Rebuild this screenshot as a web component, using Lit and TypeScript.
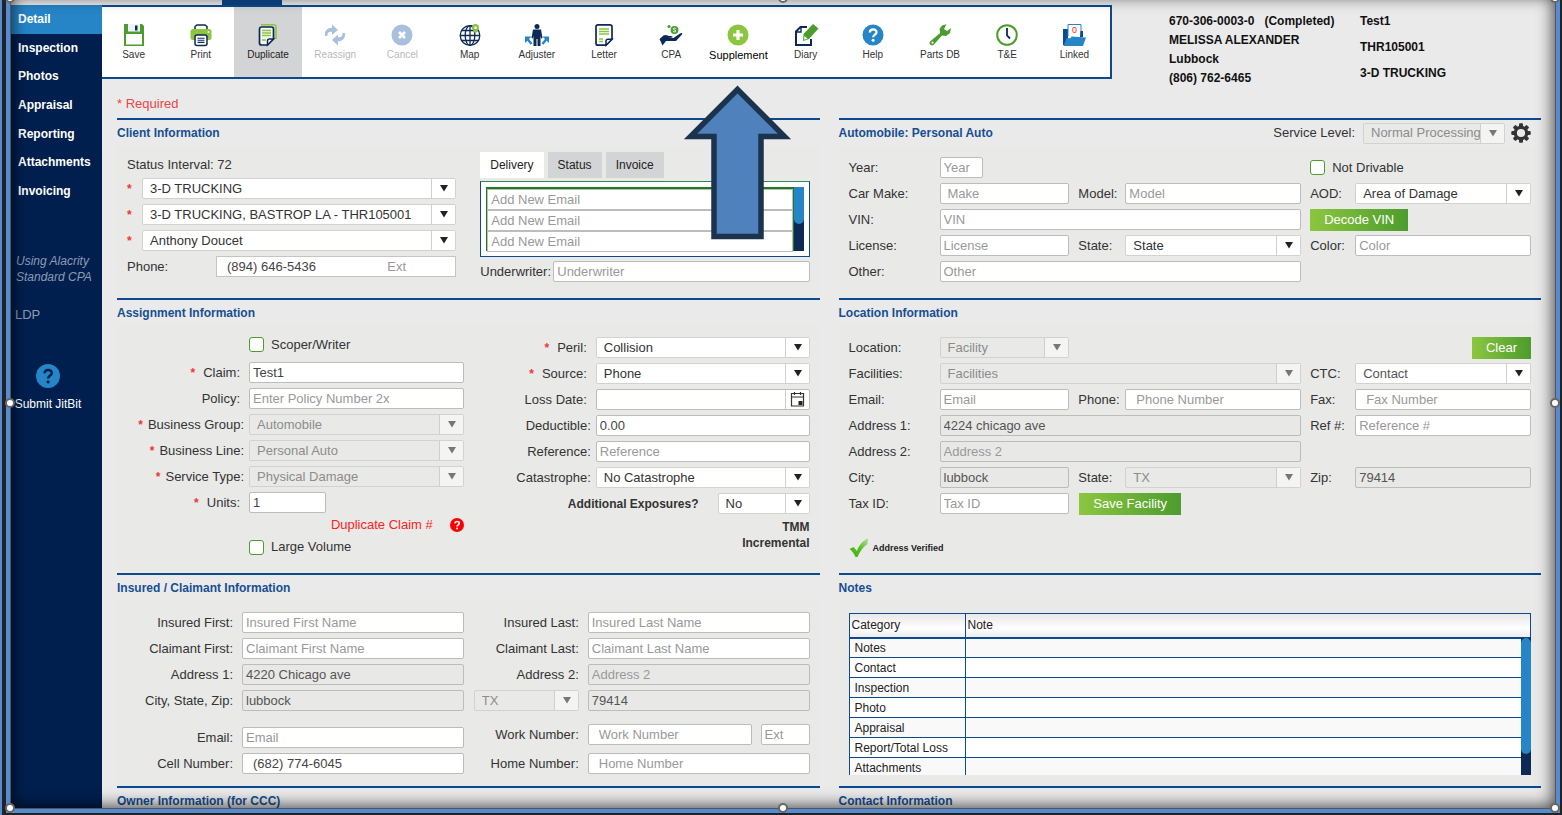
import { LitElement, html, svg, css, nothing, TemplateResult } from "lit";
import { customElement } from "lit/decorators.js";
import { classMap } from "lit/directives/class-map.js";

const NAVY = "#0d2a57";
const GREEN = "#4c9c2e";
const LIME = "#8cc63f";
const BLUE = "#2585c7";

const page = (x: number, y: number, w: number, h: number) => svg`
  <path d=${`M${x + 2} ${y}H${x + w - 2}a2 2 0 0 1 2 2V${y + h - 6}L${x + w - 6} ${y + h}H${x + 2}a2 2 0 0 1-2-2V${y + 2}a2 2 0 0 1 2-2z`} fill="#fff" fill-opacity="0.800" stroke=${NAVY} stroke-width="1.700"/>
  <path d=${`M${x + w} ${y + h - 6}h-4a2 2 0 0 0-2 2v4z`} fill="#fff" stroke=${NAVY} stroke-width="1.500"/>`;

const ICONS: Record<string, TemplateResult> = {
  save: svg`<path d="M1 0h18l2 2v20H1z" fill=${GREEN}/><rect x="5" y="0" width="12" height="7.500" fill="#eef3fb"/><rect x="12" y="1.500" width="2.500" height="5" fill=${NAVY}/><rect x="3" y="10" width="16" height="10.500" fill="#fff"/>`,
  print: svg`<path d="M5 6V2.500L7 1h8l2 1.500V6" fill="#fff" stroke=${NAVY} stroke-width="1.500"/><rect x="0.500" y="5" width="21" height="11" rx="2.500" fill=${LIME}/><circle cx="18.500" cy="8" r="1" fill="#fff"/><rect x="5" y="11" width="12" height="10.500" rx="2" fill="#fff" stroke=${NAVY} stroke-width="1.500"/><path d="M7.500 14.200h7M7.500 16.300h7M7.500 18.400h7" stroke=${NAVY} stroke-width="1.100"/>`,
  duplicate: svg`<path d="M4 0.800h13a2 2 0 0 1 2 2V15" fill="none" stroke=${LIME} stroke-width="1.600"/>${page(2.5, 3, 14, 18)}<path d="M5 6.500h9M5 9h9M5 11.500h9M5 16h4" stroke=${LIME} stroke-width="1.400"/>`,
  reassign: svg`<path d="M1 12c-1-5 3-9 7-8V0.500L14 6 8 11V8C5 7 3 9 3.500 12z" fill="#a9c0dc"/><path d="M21 9c1 5-3 9-7 8v4.500L8 16l6-5.500V13c3 1 5-1 4.500-4z" fill="#a9c0dc"/>`,
  cancel: svg`<circle cx="11" cy="11" r="10.500" fill="#a9c0dc"/><path d="M8 8l6 6M14 8l-6 6" stroke="#fff" stroke-width="2.600"/>`,
  map: svg`<g fill="none" stroke=${NAVY} stroke-width="1.300"><circle cx="11" cy="11.500" r="9.800"/><ellipse cx="11" cy="11.500" rx="4.800" ry="9.800"/><path d="M11 1.700v19.600M1.200 11.500h19.600M2.600 6.500h16.800M2.600 16.500h16.800"/></g><path d="M16.500 10.500c-1-3-3.500-4.500-3.500-7a3.500 3.500 0 0 1 7 0c0 2.500-2.500 4-3.500 7z" fill=${LIME}/><circle cx="16.500" cy="3.700" r="1.300" fill="#fff"/>`,
  adjuster: svg`<circle cx="11" cy="2.500" r="2.500" fill=${NAVY}/><path d="M7 5.500h8l1.500 8.500-1.500.500-.500-3v10.500h-3v-7h-1v7h-3V11.500l-.500 3-1.500-.500z" fill=${NAVY}/><path d="M5.500 20L1.500 15M16.500 20l4-5" stroke=${BLUE} stroke-width="2.400"/><path d="M-1 12.500h6.500L-1 19zM23 12.500h-6.500L23 19z" fill=${BLUE}/>`,
  letter: svg`${page(3, 0.9, 16, 20.3)}<path d="M6 5h10M6 7.500h10M6 10h10M6 15h4M6 17.500h4" stroke=${LIME} stroke-width="1.400"/>`,
  cpa: svg`<circle cx="9" cy="2.500" r="1.600" fill=${GREEN}/><circle cx="14.500" cy="6" r="3.900" fill=${GREEN}/><path d="M16 4.700c-1-1-3-.500-2.800.500.300 1 2.600.700 2.600 1.800 0 1-2 1.200-2.800.200" fill="none" stroke="#fff" stroke-width="0.900"/><path d="M-0.500 15l4-3.500c3-1.500 4 .500 6.500.500 2 0 3 .500 2.500 1.500l-4 .500h5L20 9.500c1.500-1 3-.500 2 1L16 17H6l-3.500 4.500z" fill=${NAVY}/>`,
  supplement: svg`<circle cx="11" cy="11" r="10.500" fill=${LIME}/><path d="M11 6v10M6 11h10" stroke="#fff" stroke-width="3.200"/>`,
  diary: svg`<path d="M12 3H5.500L1 7.500V21h15v-6" fill="none" stroke=${NAVY} stroke-width="2"/><path d="M1 8h5V3" fill="none" stroke=${NAVY} stroke-width="1.400"/><path d="M8.500 10L18 0l5.500 4.500L14 15l-6 2z" fill=${GREEN}/><path d="M9.500 12l3 2.800-3.500 1z" fill="#fff"/>`,
  help: svg`<circle cx="11" cy="11" r="10.500" fill=${BLUE}/><path d="M7.800 8.500c.300-4 6.700-4 6.700-.300 0 2.500-3.300 2.400-3.300 5" fill="none" stroke="#fff" stroke-width="2.300"/><circle cx="11.100" cy="16.300" r="1.500" fill="#fff"/>`,
  parts: svg`<path d="M17.500.300l-4.500 1.200-2.500 3.500.700 4L1 17.500c-1.500 2 1 5 3.500 3.500L13 11.500l4 .500 4-3L22 4l-4 3-3-2z" fill=${GREEN}/><circle cx="3.500" cy="18.700" r="1.100" fill="#fff"/>`,
  te: svg`<circle cx="11" cy="11" r="9.800" fill="#fff" stroke=${GREEN} stroke-width="2"/><path d="M11 4v7.500l3 3" fill="none" stroke=${NAVY} stroke-width="1.800"/>`,
  linked: svg`<path d="M0 5h5v12L2 21H0z" fill="#0d4c8c"/><path d="M5 12V0.500h13V12" fill="#fff" stroke=${BLUE} stroke-width="1"/><path d="M17.500 7H20v6h-3z" fill="#0d4c8c"/><path d="M3.500 14l4 .200 1-1.700L23 13.500 20 22H0.500z" fill=${BLUE}/><text x="11.500" y="9" text-anchor="middle" font-size="9" fill="#f22">0</text>`,
};

const TOOLS: [string, string, string?][] = [
  ["save", "Save"], ["print", "Print"], ["duplicate", "Duplicate", "active"],
  ["reassign", "Reassign", "off"], ["cancel", "Cancel", "off"], ["map", "Map"],
  ["adjuster", "Adjuster"], ["letter", "Letter"], ["cpa", "CPA"],
  ["supplement", "Supplement", "strong"], ["diary", "Diary"], ["help", "Help"],
  ["parts", "Parts DB"], ["te", "T&E"], ["linked", "Linked"],
];

const NAV = ["Detail", "Inspection", "Photos", "Appraisal", "Reporting", "Attachments", "Invoicing"];
const NOTES = ["Notes", "Contact", "Inspection", "Photo", "Appraisal", "Report/Total Loss", "Attachments"];

interface Opt {
  value?: string;
  ph?: string;
  cls?: string;
  disabled?: boolean;
  name?: string;
}

const input = (id: string, o: Opt = {}) => html`<input
  id=${id} class="box ${o.cls ?? ""}" type="text" ?disabled=${!!o.disabled}
  aria-label=${o.name ?? nothing} .value=${o.value ?? ""} placeholder=${o.ph ?? ""}>`;

const select = (id: string, text: string, o: Opt = {}) => html`<span
  class=${`sel ${o.cls ?? ""} ${o.disabled ? "dis" : ""}`}>
  <select id=${id} class="box" ?disabled=${!!o.disabled} aria-label=${o.name ?? nothing}><option>${text}</option></select>
  <svg class="arrow" viewBox="0 0 25 21" aria-hidden="true"><path class="cell" d="M0.500 1H24v19H0.500z"/><path class="rule" d="M0.500 1v19"/><path class="tri" d="M9 7h8l-4 6.500z"/></svg>
</span>`;

const label = (id: string, text: string, cls = "", req = false) => html`<label
  for=${id} class=${cls}>${req ? html`<b class="req">*</b>` : nothing}${text}</label>`;

const check = (id: string, text: string, cls = "") => html`<span class="check ${cls}"><input
  type="checkbox" id=${id}><label for=${id}>${text}</label></span>`;

@customElement("app-root")
export class AppRoot extends LitElement {
  static styles = css`
    :host {
      display: block;
      font-family: "Liberation Sans", Arial, sans-serif;
      font-size: 13px;
      line-height: 16px;
      color: #333;
    }
    *, *::before, *::after { box-sizing: border-box; }
    input, select, button { font: inherit; margin: 0; }
    .shell {
      position: relative;
      display: flex;
      height: 100vh;
      overflow: hidden;
      padding: 5px 7px 0 11px;
      background: #eaeaea;
    }
    .stub {
      position: absolute;
      top: 0;
      left: 222px;
      width: 60px;
      height: 5px;
      background: #0b3a75;
      z-index: 4;
    }
    /* sidebar */
    .side {
      flex: none;
      width: 91px;
      background: #001f4e;
      position: relative;
      z-index: 1;
    }
    .nav {
      list-style: none;
      margin: 0;
      padding: 0;
      height: 200px;
      display: flex;
      flex-direction: column;
    }
    .nav li { flex: 1; display: flex; }
    .nav a {
      flex: 1;
      display: flex;
      align-items: center;
      padding-left: 7px;
      color: #fff;
      text-decoration: none;
      font-weight: bold;
      font-size: 12px;
    }
    .nav .on { background: #2585c7; }
    .using { margin: 48px 0 0; padding-left: 5px; color: #8e9cb3; font-style: italic; white-space: nowrap; font-size: 12px; }
    .ldp { margin: 22px 0 0; padding-left: 4px; color: #8e9cb3; }
    .submit {
      display: flex;
      flex-direction: column;
      align-items: center;
      gap: 8px;
      width: 74px;
      margin-top: 41px;
      padding: 0;
      border: 0;
      background: none;
      color: #fff;
      font-size: 12px;
      white-space: nowrap;
    }
    .submit svg { width: 24px; height: 24px; }
    /* header */
    .main { flex: 1; min-width: 0; }
    .head { display: flex; height: 74px; }
    .tools {
      flex: 1;
      min-width: 0;
      display: flex;
      margin-left: -2px;
      padding-right: 2px;
      border: 2px solid #0b4a8f;
      border-left: 0;
      background: #fff;
    }
    .tool {
      flex: 1 1 0;
      min-width: 0;
      display: flex;
      flex-direction: column;
      align-items: center;
      gap: 2px;
      padding: 17px 0 0;
      border: 0;
      background: none;
      color: #333;
      font-size: 10px;
      line-height: 14px;
      white-space: nowrap;
    }
    .tool svg { width: 22px; height: 22px; overflow: visible; }
    .tool.active { background: #d3d4d6; color: #222; }
    .tool.off { color: #b9b9b9; }
    .tool.strong { font-size: 11px; color: #000; }
    .info {
      flex: none;
      width: 443px;
      display: flex;
      padding: 7px 0 0 57px;
      font-weight: bold;
      color: #111;
      font-size: 12px;
    }
    .info p { margin: 0; }
    .who { width: 191px; line-height: 19px; }
    .who span { margin-left: 10px; }
    .ref { display: flex; flex-direction: column; gap: 7px; line-height: 19px; }
    .required { margin: 0; padding: 17px 0 6px 15px; color: #ee4444; }
    /* sections */
    .grid {
      display: grid;
      grid-template-columns: minmax(0, 1fr) minmax(0, 1fr);
      column-gap: 19px;
      padding: 0 14px 0 15px;
    }
    .sec { border-top: 2px solid #0b4a8f; display: flex; flex-direction: column; }
    .bar { display: flex; align-items: center; height: 26px; gap: 6px; padding-right: 10px; }
    .bar h2 { flex: 1; margin: 0; font-size: 12px; line-height: 16px; color: #164e92; font-weight: bold; }
    .bar .gear { border: 0; padding: 0; background: none; width: 20px; height: 20px; }
    .bar .sel { width: 142px; margin-left: 2px; }
    .body { flex: 1; padding: 6px 10px 16px; background: #e9e9e7; display: flex; }
    .body.low { padding-bottom: 11px; }
    .col { display: flex; flex-direction: column; gap: 5px; padding-top: 5px; flex: 1; min-width: 0; }
    .row { display: flex; align-items: center; height: 21px; }
    .row > .box, .row > .sel { flex: 1; min-width: 0; }
    label { white-space: nowrap; }
    .req { color: #f03535; margin-right: 8px; font-size: 12px; }
    .tight .req { margin-right: 5px; }
    .box {
      width: 100%;
      min-width: 0;
      height: 21px;
      padding: 0 3px;
      border: 1px solid #bcbcbc;
      border-radius: 2px;
      background: #fff;
      color: #444;
      outline: 0;
    }
    .box::placeholder { color: #999; opacity: 1; }
    .box:disabled { background: #e8e8e6; color: #555; opacity: 1; }
    .box.tel { padding-left: 10px; }
    .box.make { padding-left: 7px; }
    .box.year { width: 43px; }
    .sel { display: grid; grid-template-columns: minmax(0, 1fr); min-width: 0; }
    .sel > * { grid-area: 1 / 1; }
    .sel select { appearance: none; border-color: #d2d2d0; padding: 0 24px 0 7px; color: #333; }
    .sel.dis select { background: #e9e9e7; color: #8c8c8c; }
    .arrow { width: 25px; height: 21px; justify-self: end; pointer-events: none; }
    .cell { fill: #fff; }
    .rule { stroke: #cfcfcd; fill: none; }
    .tri { fill: #222; }
    .dis .cell { fill: #f4f4f3; }
    .dis .tri { fill: #777; }
    .muted select { color: #555; }
    .check { display: flex; align-items: center; gap: 7px; height: 15px; }
    .check input {
      appearance: none;
      flex: none;
      width: 15px;
      height: 15px;
      border: 1px solid #4c9c2e;
      border-radius: 3px;
      background: #fff;
    }
    .btn {
      height: 22px;
      padding: 0 14px;
      border: 0;
      color: #fff;
      background: linear-gradient(90deg, #8cc63f, #4c9c2e);
      white-space: nowrap;
    }
    /* client */
    .client { gap: 24px; }
    .status { height: 16px; margin: 0; }
    .client .req { width: 15px; margin: 0; }
    .client .row .mid { width: 89px; }
    .pair {
      flex: 1;
      display: flex;
      min-width: 0;
      height: 21px;
      border: 1px solid #c4c4c2;
      background: #fff;
    }
    .pair .box { border: 0; height: 19px; background: none; }
    .pair .ext { flex: none; width: 71px; }
    .tabs { display: flex; gap: 4px; height: 26px; margin-bottom: 3px; }
    .tabs button { border: 0; padding: 0 10px; background: #d3d4d6; color: #222; font-size: 12px; }
    .tabs .on { background: #fff; }
    .mails { display: flex; height: 76px; padding: 5px; border: 1px solid #0b4a8f; border-top-color: #2e8b57; background: #fff; margin-bottom: 4px; }
    .mails .list { flex: 1; border: 1px solid #1d7a1d; border-top-width: 2px; border-bottom: 0; background: #ddd; }
    .mails .list .box { display: block; border-radius: 0; }
    .track { width: 10px; background: #0d2a57; }
    .thumb { height: 37px; background: #2585c7; border-radius: 0 0 5px 5px; }
    .col.top { gap: 0; padding-top: 0; }
    .col.top .row label { width: 73px; }
    /* six column grid */
    .six {
      flex: 1;
      display: grid;
      align-content: start;
      align-items: center;
      grid-template-columns: 91px minmax(0, 130fr) 56px minmax(0, 176fr) 54px minmax(0, 176fr);
      grid-auto-rows: 21px;
      row-gap: 5px;
      padding-top: 5px;
    }
    .g { padding-left: 9px; }
    .wide { grid-column: 2 / 5; }
    .at5 { grid-column: 5 / 7; justify-self: start; margin-left: 9px; }
    .end { grid-column: 5 / 7; justify-self: end; }
    .c1 { grid-column: 1; }
    .at3 { grid-column: 3 / 5; justify-self: start; margin-left: 10px; }
    .verified { grid-column: 1 / 7; display: flex; align-items: center; gap: 4px; margin-top: 36px; font-size: 9px; font-weight: bold; color: #222; }
    /* assignment */
    .assign .col { flex: 337 1 0; }
    .assign .second { flex: 346 1 0; }
    .assign .row label { width: 122px; text-align: right; padding-right: 9px; flex: none; }
    .assign .second .row label { width: 132px; }
    .assign .row label.tight { padding-right: 5px; }
    .assign .check { margin-left: 122px; }
    .check.first { margin-bottom: 5px; }
    .check.last { height: 20px; }
    .row > .box.units { flex: none; width: 77px; }
    .dup { display: flex; justify-content: flex-end; align-items: center; gap: 17px; height: 14px; color: #f22; }
    .row.expo { justify-content: flex-end; }
    .row.expo > .sel { flex: none; width: 92px; }
    .assign .second .row.expo label { width: auto; font-weight: bold; padding-right: 19px; font-size: 12px; }
    .tmm { margin: 0; text-align: right; font-weight: bold; font-size: 12px; }
    /* people */
    .people {
      flex: 1;
      display: grid;
      grid-template-columns: 115px minmax(0, 1fr) 124px minmax(0, 1fr);
      grid-template-rows: repeat(4, 21px) 32px 21px;
      align-items: center;
      row-gap: 5px;
      padding-top: 5px;
    }
    .people label { text-align: right; padding-right: 9px; }
    .people .state { margin: 0 9px 0 10px; }
    .people .drop { align-self: end; line-height: 21px; }
    .people .lift { margin-top: 5px; }
    .duo { display: grid; grid-template-columns: minmax(0, 1fr) 49px; gap: 9px; }
    /* notes */
    .notes { position: relative; flex: 1; height: 162px; margin-top: 6px; overflow: hidden; }
    .notes table { width: 100%; border-collapse: collapse; table-layout: fixed; color: #222; font-size: 12px; }
    .notes th {
      height: 24px;
      padding: 0 2px;
      text-align: left;
      font-weight: normal;
      border: 1px solid #0b4a8f;
      border-bottom-width: 2px;
      background: linear-gradient(#e8e8e8, #fff 60%, #ececec);
    }
    .notes th:first-child { width: 116px; }
    .notes td { height: 20px; padding: 0 5px; border: 1px solid #0b4a8f; background: #fff; line-height: 16px; }
    .notes tr:nth-child(odd) td { background: #f9f9f9; }
    .notes .track { position: absolute; right: 0; top: 25px; bottom: 0; }
    .notes .thumb { height: 116px; border-radius: 5px; }
    /* overlays */
    .glow, .edge { position: absolute; pointer-events: none; }
    .glow { inset: -6px 7px 7px 10px; z-index: 2; box-shadow: inset 0 0 16px 2px rgba(0, 0, 0, 0.7); }
    .edge {
      inset: 0;
      z-index: 5;
      box-shadow:
        inset 2px 0 #548bd4, inset 6px 0 #222, inset 0 -2px #222, inset -2px 0 #222,
        inset 10px 0 #548bd4, inset -6px 0 #548bd4, inset 0 -6px #548bd4,
        inset 11px 0 #555, inset -7px 0 #555, inset 0 -7px #555;
    }
    .callout { position: absolute; left: 680px; top: 80px; width: 116px; height: 164px; z-index: 3; pointer-events: none; }
    .knob {
      position: absolute;
      width: 10px;
      height: 10px;
      border: 2px solid #666;
      border-radius: 50%;
      background: #fff;
      z-index: 6;
      transform: translate(-50%, -50%);
    }
    .kt { top: -2px; } .km { top: 403px; } .kb { top: calc(100% - 7px); }
    .kl { left: 10px; } .kc { left: 783px; } .kr { left: calc(100% - 7px); }
  `;

  private client() {
    return html`<section class="sec">
      <div class="bar"><h2>Client Information</h2></div>
      <div class="body client">
        <div class="col">
          <p class="status">Status Interval: 72</p>
          ${["3-D TRUCKING", "3-D TRUCKING, BASTROP LA - THR105001", "Anthony Doucet"].map(
            (t, i) => html`<div class="row"><b class="req">*</b>${select("client" + i, t, { name: ["Client", "Branch", "Contact"][i] })}</div>`
          )}
          <div class="row">
            ${label("cphone", "Phone:", "mid")}
            <div class="pair">${input("cphone", { value: "(894) 646-5436", cls: "tel" })}${input("cext", { ph: "Ext", cls: "ext", name: "Extension" })}</div>
          </div>
        </div>
        <div class="col top">
          <div class="tabs"><button class="on">Delivery</button><button>Status</button><button>Invoice</button></div>
          <div class="mails">
            <div class="list">${[1, 2, 3].map((n) => input("mail" + n, { ph: "Add New Email", name: "Email " + n }))}</div>
            <div class="track"><div class="thumb"></div></div>
          </div>
          <div class="row">${label("uw", "Underwriter:")}${input("uw", { ph: "Underwriter" })}</div>
        </div>
      </div>
    </section>`;
  }

  private auto() {
    return html`<section class="sec">
      <div class="bar">
        <h2>Automobile: Personal Auto</h2>
        ${label("svc", "Service Level:")}
        ${select("svc", "Normal Processing", { disabled: true })}
        <button class="gear" aria-label="Settings"><svg viewBox="0 0 20 20" width="20" height="20">
          <g fill="#333">${[0, 45, 90, 135].map((a) => svg`<rect x="8" y="0.300" width="4" height="19.400" rx="1" transform=${`rotate(${a} 10 10)`}/>`)}</g>
          <circle cx="10" cy="10" r="5.700" fill="#eaeaea" stroke="#333" stroke-width="3.200"/>
        </svg></button>
      </div>
      <div class="body"><div class="six">
        ${label("year", "Year:")}${input("year", { ph: "Year", cls: "year" })}${check("nd", "Not Drivable", "at5")}
        ${label("make", "Car Make:", "c1")}${input("make", { ph: "Make", cls: "make" })}
        ${label("model", "Model:", "g")}${input("model", { ph: "Model" })}
        ${label("aod", "AOD:", "g")}${select("aod", "Area of Damage")}
        ${label("vin", "VIN:")}${input("vin", { ph: "VIN", cls: "wide" })}<button class="btn at5">Decode VIN</button>
        ${label("lic", "License:")}${input("lic", { ph: "License" })}
        ${label("ast", "State:", "g")}${select("ast", "State")}
        ${label("color", "Color:", "g")}${input("color", { ph: "Color" })}
        ${label("other", "Other:")}${input("other", { ph: "Other", cls: "wide" })}
      </div></div>
    </section>`;
  }

  private assignment() {
    return html`<section class="sec">
      <div class="bar"><h2>Assignment Information</h2></div>
      <div class="body assign">
        <div class="col">
          ${check("scoper", "Scoper/Writer", "first")}
          <div class="row">${label("claim", "Claim:", "", true)}${input("claim", { value: "Test1" })}</div>
          <div class="row">${label("policy", "Policy:")}${input("policy", { ph: "Enter Policy Number 2x" })}</div>
          <div class="row">${label("bg", "Business Group:", "tight", true)}${select("bg", "Automobile", { disabled: true })}</div>
          <div class="row">${label("bl", "Business Line:", "tight", true)}${select("bl", "Personal Auto", { disabled: true })}</div>
          <div class="row">${label("st", "Service Type:", "tight", true)}${select("st", "Physical Damage", { disabled: true })}</div>
          <div class="row">${label("units", "Units:", "", true)}${input("units", { value: "1", cls: "units" })}</div>
          <div class="dup">Duplicate Claim #<svg width="14" height="14" viewBox="0 0 22 22" aria-hidden="true"><circle cx="11" cy="11" r="11" fill="#f00"/><path d="M7.800 8.500c.300-4 6.700-4 6.700-.300 0 2.500-3.300 2.400-3.300 5" fill="none" stroke="#fff" stroke-width="2.500"/><circle cx="11.100" cy="16.500" r="1.600" fill="#fff"/></svg></div>
          ${check("lv", "Large Volume", "last")}
        </div>
        <div class="col second">
          <div class="row">${label("peril", "Peril:", "", true)}${select("peril", "Collision")}</div>
          <div class="row">${label("source", "Source:", "", true)}${select("source", "Phone")}</div>
          <div class="row">${label("loss", "Loss Date:")}<span class="sel">${input("loss")}<svg class="arrow" viewBox="0 0 25 21" aria-hidden="true"><path class="rule" d="M0.500 1v19"/><g fill="none" stroke="#333" stroke-width="1.200"><path d="M6.500 4.500h12v12.500h-12zM6.500 8h12"/><path d="M9.500 3v3M15.500 3v3"/></g><path d="M13.500 12h4v4h-4z" fill="#222"/></svg></span></div>
          <div class="row">${label("ded", "Deductible:", "tight")}${input("ded", { value: "0.00" })}</div>
          <div class="row">${label("refn", "Reference:", "tight")}${input("refn", { ph: "Reference" })}</div>
          <div class="row">${label("cat", "Catastrophe:", "tight")}${select("cat", "No Catastrophe")}</div>
          <div class="row expo">${label("expo", "Additional Exposures?")}${select("expo", "No")}</div>
          <p class="tmm">TMM<br>Incremental</p>
        </div>
      </div>
    </section>`;
  }

  private facility() {
    return html`<section class="sec">
      <div class="bar"><h2>Location Information</h2></div>
      <div class="body"><div class="six">
        ${label("loc", "Location:")}${select("loc", "Facility", { disabled: true })}<button class="btn end">Clear</button>
        ${label("fac", "Facilities:", "c1")}${select("fac", "Facilities", { disabled: true, cls: "wide" })}
        ${label("ctc", "CTC:", "g")}${select("ctc", "Contact", { cls: "muted" })}
        ${label("lem", "Email:")}${input("lem", { ph: "Email" })}
        ${label("lph", "Phone:", "g")}${input("lph", { ph: "Phone Number", cls: "tel" })}
        ${label("fax", "Fax:", "g")}${input("fax", { ph: "Fax Number", cls: "tel" })}
        ${label("la1", "Address 1:")}${input("la1", { value: "4224 chicago ave", cls: "wide", disabled: true })}
        ${label("lref", "Ref #:", "g")}${input("lref", { ph: "Reference #" })}
        ${label("la2", "Address 2:")}${input("la2", { ph: "Address 2", cls: "wide", disabled: true })}
        ${label("lcity", "City:", "c1")}${input("lcity", { value: "lubbock", disabled: true })}
        ${label("lst", "State:", "g")}${select("lst", "TX", { disabled: true })}
        ${label("lzip", "Zip:", "g")}${input("lzip", { value: "79414", disabled: true })}
        ${label("tax", "Tax ID:")}${input("tax", { ph: "Tax ID" })}<button class="btn at3">Save Facility</button>
        <div class="verified"><svg width="20" height="20" viewBox="0 0 20 20" aria-hidden="true">
          <defs><linearGradient id="tick" x1="0" y1="1" x2="1" y2="0"><stop offset="0" stop-color="#3fae0e"/><stop offset="0.500" stop-color="#55bf22"/><stop offset="1" stop-color="#b5dc9c"/></linearGradient></defs>
          <path d="M0.500 11l4-2 3.500 4C10 7 14 2.500 19 0.500L18.500 6C14 9 11 13.500 8.500 19H6.500C5 15.500 3 13 0.500 11z" fill="url(#tick)"/></svg>Address Verified</div>
      </div></div>
    </section>`;
  }

  private insured() {
    return html`<section class="sec">
      <div class="bar"><h2>Insured / Claimant Information</h2></div>
      <div class="body low"><div class="people">
        ${label("if", "Insured First:")}${input("if", { ph: "Insured First Name" })}
        ${label("il", "Insured Last:")}${input("il", { ph: "Insured Last Name" })}
        ${label("cf", "Claimant First:")}${input("cf", { ph: "Claimant First Name" })}
        ${label("cl", "Claimant Last:")}${input("cl", { ph: "Claimant Last Name" })}
        ${label("a1", "Address 1:")}${input("a1", { value: "4220 Chicago ave", disabled: true })}
        ${label("a2", "Address 2:")}${input("a2", { ph: "Address 2", disabled: true })}
        ${label("city", "City, State, Zip:")}${input("city", { value: "lubbock", disabled: true })}
        ${select("state", "TX", { disabled: true, cls: "state", name: "State" })}${input("zip", { value: "79414", disabled: true, name: "Zip" })}
        ${label("em", "Email:", "drop")}${input("em", { ph: "Email", cls: "drop" })}
        ${label("wn", "Work Number:", "lift")}<div class="duo lift">${input("wn", { ph: "Work Number", cls: "tel" })}${input("we", { ph: "Ext", name: "Extension" })}</div>
        ${label("cn", "Cell Number:")}${input("cn", { value: "(682) 774-6045", cls: "tel" })}
        ${label("hn", "Home Number:")}${input("hn", { ph: "Home Number", cls: "tel" })}
      </div></div>
    </section>`;
  }

  private notes() {
    return html`<section class="sec">
      <div class="bar"><h2>Notes</h2></div>
      <div class="body low"><div class="notes">
        <table>
          <thead><tr><th>Category</th><th>Note</th></tr></thead>
          <tbody>${NOTES.map((n) => html`<tr><td>${n}</td><td></td></tr>`)}</tbody>
        </table>
        <div class="track"><div class="thumb"></div></div>
      </div></div>
    </section>`;
  }

  render() {
    return html`<div class="shell">
      <div class="stub"></div>
      <aside class="side">
        <ul class="nav">${NAV.map((n, i) => html`<li><a href="#" class=${classMap({ on: i === 0 })}>${n}</a></li>`)}</ul>
        <p class="using">Using Alacrity<br>Standard CPA</p>
        <p class="ldp">LDP</p>
        <button class="submit"><svg viewBox="0 0 22 22" aria-hidden="true"><circle cx="11" cy="11" r="11" fill="#2585c7"/><path d="M7.800 8.500c.300-4 6.700-4 6.700-.300 0 2.500-3.300 2.400-3.300 5" fill="none" stroke="#001f4e" stroke-width="2.300"/><circle cx="11.100" cy="16.300" r="1.500" fill="#001f4e"/></svg>Submit JitBit</button>
      </aside>
      <main class="main">
        <header class="head">
          <div class="tools">${TOOLS.map(([k, t, c]) => html`<button class="tool ${c ?? ""}" ?disabled=${c === "off"}><svg viewBox="0 0 22 22" aria-hidden="true">${ICONS[k]}</svg>${t}</button>`)}</div>
          <div class="info">
            <div class="who"><p>670-306-0003-0<span>(Completed)</span></p><p>MELISSA ALEXANDER</p><p>Lubbock</p><p>(806) 762-6465</p></div>
            <div class="ref"><p>Test1</p><p>THR105001</p><p>3-D TRUCKING</p></div>
          </div>
        </header>
        <p class="required">* Required</p>
        <div class="grid">
          ${this.client()}${this.auto()}${this.assignment()}${this.facility()}${this.insured()}${this.notes()}
          <section class="sec"><div class="bar"><h2>Owner Information (for CCC)</h2></div></section>
          <section class="sec"><div class="bar"><h2>Contact Information</h2></div></section>
        </div>
      </main>
      <div class="glow"></div>
      <svg class="callout" viewBox="0 0 116 164" aria-hidden="true"><path d="M57.500 9.500L104.500 56.500H81V156.500H34V56.500H10.500z" fill="#4f81bd" stroke="#1c334e" stroke-width="5.500"/></svg>
      <div class="edge"></div>
      ${["kt kl", "kt kc", "kt kr", "km kl", "km kr", "kb kl", "kb kc", "kb kr"].map((k) => html`<span class="knob ${k}"></span>`)}
    </div>`;
  }
}
